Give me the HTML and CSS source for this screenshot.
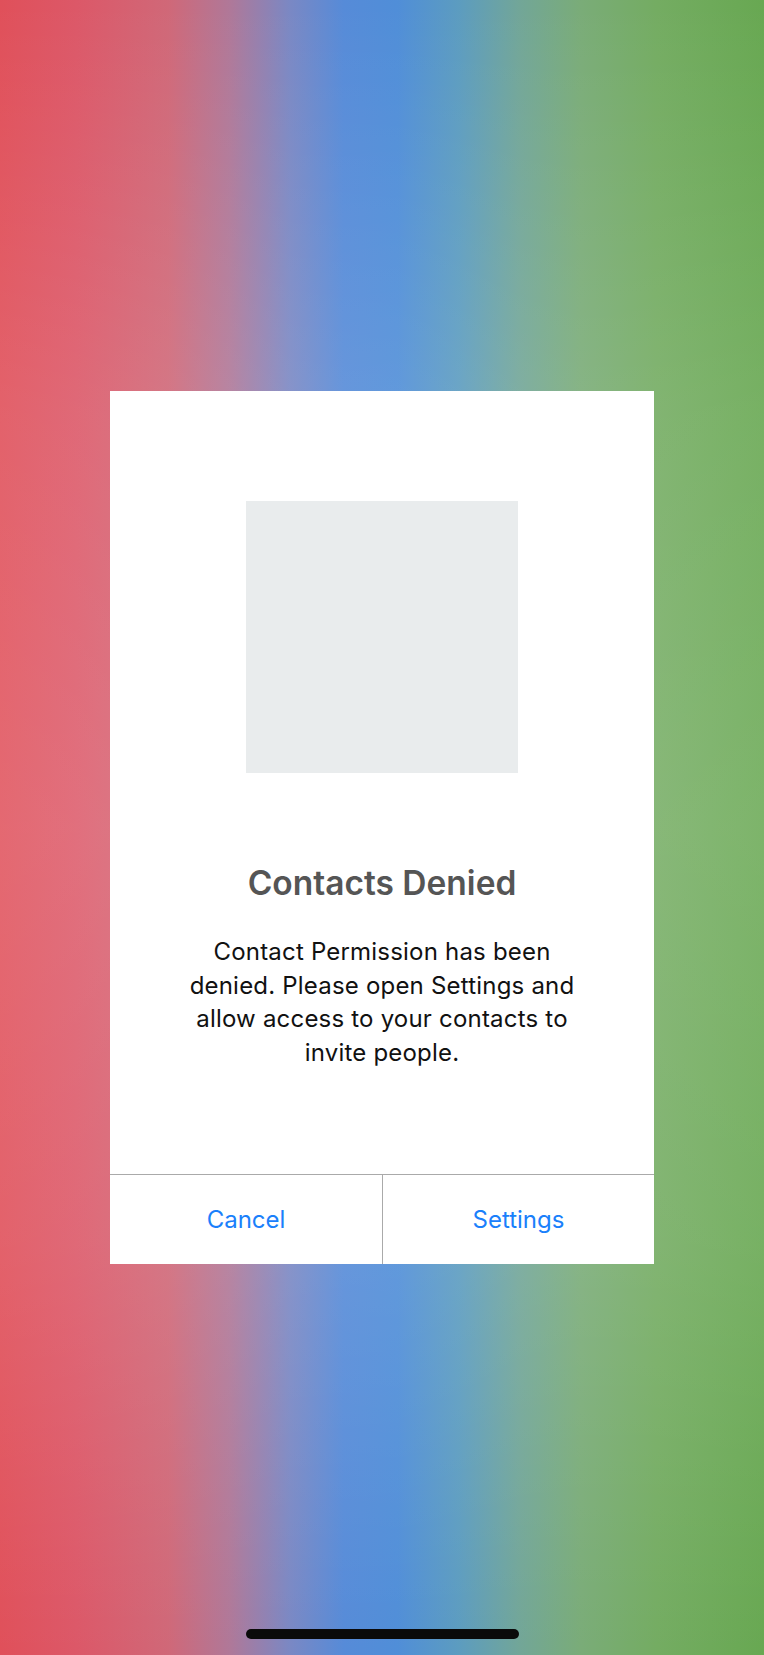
FILE: index.html
```html
<!DOCTYPE html>
<html lang="en">
<head>
<meta charset="utf-8">
<title>Contacts Denied</title>
<link rel="stylesheet" href="styles.css">
</head>
<body>
<div class="screen">
  <div class="dialog">
    <div class="dialog-content">
      <div class="illustration"></div>
      <h1 class="dialog-title">Contacts Denied</h1>
      <p class="dialog-text">Contact Permission has been denied. Please open Settings and allow access to your contacts to invite people.</p>
    </div>
    <div class="dialog-actions">
      <button class="dialog-btn">Cancel</button>
      <button class="dialog-btn">Settings</button>
    </div>
  </div>
  <div class="home-indicator"></div>
</div>
</body>
</html>
```
FILE: styles.css
```css
html, body {
  margin: 0;
  padding: 0;
}
body {
  font-family: "Inter", "Liberation Sans", sans-serif;
}
.screen {
  width: 764px;
  height: 1655px;
  box-sizing: border-box;
  padding-top: 391px;
  display: flex;
  flex-direction: column;
  align-items: center;
  background:
    linear-gradient(to bottom,
      rgba(255,255,255,0) 0%,
      rgba(255,255,255,0.10) 25%,
      rgba(255,255,255,0.14) 50%,
      rgba(255,255,255,0.10) 75%,
      rgba(255,255,255,0) 100%),
    linear-gradient(to right,
      #e0505a 0%,
      #dc5868 10%,
      #d06878 22%,
      #b07898 30%,
      #7a88c4 38%,
      #568bd8 45%,
      #508ed8 52%,
      #5c9cc0 60%,
      #72a698 68%,
      #7aac78 76%,
      #74ac62 86%,
      #68a852 100%);
}
.dialog {
  width: 544px;
  height: 873px;
  background: #ffffff;
  display: flex;
  flex-direction: column;
}
.dialog-content {
  flex: 1;
  display: flex;
  flex-direction: column;
  align-items: center;
  padding-top: 110px;
}
.illustration {
  width: 272px;
  height: 272px;
  background: #e9eced;
}
.dialog-title {
  margin: 90px 0 0;
  font-size: 33.5px;
  line-height: 40px;
  font-weight: 600;
  color: #555555;
}
.dialog-text {
  margin: 32px 0 0;
  width: 400px;
  text-align: center;
  font-size: 24px;
  letter-spacing: 0.2px;
  line-height: 33.6px;
  color: #111111;
}
.dialog-actions {
  height: 89px;
  border-top: 1px solid #aaaaaa;
  display: grid;
  grid-template-columns: 1fr 1fr;
}
.dialog-btn {
  border: 0;
  background: #ffffff;
  font-family: "Inter", "Liberation Sans", sans-serif;
  font-size: 24px;
  color: #1a80fb;
  padding: 0;
}
.dialog-btn + .dialog-btn {
  border-left: 1px solid #aaaaaa;
}
.home-indicator {
  margin-top: 365px;
  width: 273px;
  height: 10px;
  border-radius: 5px;
  background: #0a0a0a;
}
```
